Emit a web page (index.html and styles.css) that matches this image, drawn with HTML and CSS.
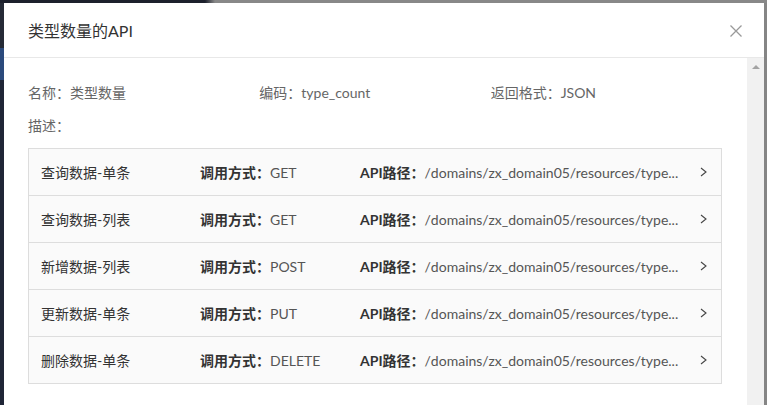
FILE: index.html
```html
<!DOCTYPE html>
<html lang="zh-CN">
<head>
<meta charset="utf-8">
<title>类型数量的API</title>
<link rel="stylesheet" href="styles.css">
</head>
<body>
<div class="page">
  <div class="top-strip"></div>
  <div class="main">
    <div class="side-left">
      <span class="sl-block sl-top"></span>
      <span class="sl-block sl-active"></span>
      <span class="sl-block sl-rest"></span>
    </div>
    <div class="modal">
      <div class="modal-header">
        <span class="title">类型数量的API</span>
        <span class="close" aria-label="关闭">
          <svg width="12" height="12" viewBox="0 0 12 12"><path d="M0.5 0.5L11.5 11.5M11.5 0.5L0.5 11.5" stroke="#999" stroke-width="1.3" fill="none"/></svg>
        </span>
      </div>
      <div class="modal-body">
        <div class="content">
          <div class="info-grid">
            <div>名称：类型数量</div>
            <div>编码：type_count</div>
            <div>返回格式：JSON</div>
            <div>描述：</div>
          </div>
          <ul class="api-list">
            <li class="api-row">
              <span class="name">查询数据-单条</span>
              <span class="method"><b>调用方式：</b>GET</span>
              <span class="path"><b>API路径：</b>/domains/zx_domain05/resources/type...</span>
              <span class="chev"><svg width="7" height="10" viewBox="0 0 7 10"><path d="M1 1L6 5L1 9" stroke="#444" stroke-width="1.1" fill="none"/></svg></span>
            </li>
            <li class="api-row">
              <span class="name">查询数据-列表</span>
              <span class="method"><b>调用方式：</b>GET</span>
              <span class="path"><b>API路径：</b>/domains/zx_domain05/resources/type...</span>
              <span class="chev"><svg width="7" height="10" viewBox="0 0 7 10"><path d="M1 1L6 5L1 9" stroke="#444" stroke-width="1.1" fill="none"/></svg></span>
            </li>
            <li class="api-row">
              <span class="name">新增数据-列表</span>
              <span class="method"><b>调用方式：</b>POST</span>
              <span class="path"><b>API路径：</b>/domains/zx_domain05/resources/type...</span>
              <span class="chev"><svg width="7" height="10" viewBox="0 0 7 10"><path d="M1 1L6 5L1 9" stroke="#444" stroke-width="1.1" fill="none"/></svg></span>
            </li>
            <li class="api-row">
              <span class="name">更新数据-单条</span>
              <span class="method"><b>调用方式：</b>PUT</span>
              <span class="path"><b>API路径：</b>/domains/zx_domain05/resources/type...</span>
              <span class="chev"><svg width="7" height="10" viewBox="0 0 7 10"><path d="M1 1L6 5L1 9" stroke="#444" stroke-width="1.1" fill="none"/></svg></span>
            </li>
            <li class="api-row">
              <span class="name">删除数据-单条</span>
              <span class="method"><b>调用方式：</b>DELETE</span>
              <span class="path"><b>API路径：</b>/domains/zx_domain05/resources/type...</span>
              <span class="chev"><svg width="7" height="10" viewBox="0 0 7 10"><path d="M1 1L6 5L1 9" stroke="#444" stroke-width="1.1" fill="none"/></svg></span>
            </li>
          </ul>
        </div>
        <div class="scrollbar"><span class="arrow-up"></span></div>
      </div>
    </div>
    <div class="side-right"></div>
  </div>
</div>
</body>
</html>
```

FILE: styles.css
```css
html, body {
  margin: 0;
  padding: 0;
  width: 767px;
  height: 405px;
  overflow: hidden;
}
body {
  font-family: "Lato", "Noto Sans CJK SC", sans-serif;
  background: #1e2333;
}
.page {
  display: grid;
  grid-template-rows: 3px 402px;
  width: 767px;
  height: 405px;
}
.top-strip {
  background: linear-gradient(to right, #1c202c 0, #1c202c 205px, #888 215px, #888 100%);
}
.main {
  display: grid;
  grid-template-columns: 4px 760px 3px;
  height: 402px;
}
.side-left {
  display: flex;
  flex-direction: column;
  background: #1e2333;
}
.sl-block { display: block; }
.sl-top { height: 45px; background: #252a36; }
.sl-active { height: 32px; background: #2b4a7c; }
.sl-rest { flex: 1; background: #1f2536; }
.side-right {
  background: #858585;
}
.modal {
  background: #fff;
  display: flex;
  flex-direction: column;
  min-height: 0;
}
.modal-header {
  height: 55px;
  box-sizing: border-box;
  border-bottom: 1px solid #e8e8e8;
  display: flex;
  align-items: center;
  justify-content: space-between;
  padding: 1px 22px 0 24px;
}
.title {
  font-size: 16px;
  line-height: 22px;
  color: #333;
}
.close {
  display: flex;
  width: 12px;
  height: 12px;
}
.modal-body {
  flex: 1;
  display: flex;
  min-height: 0;
}
.content {
  flex: 1;
  min-width: 0;
  padding: 24px 25px 0 24px;
}
.scrollbar {
  width: 17px;
  background: #f1f1f1;
  display: flex;
  justify-content: center;
  align-items: flex-start;
  padding-top: 7px;
  box-sizing: border-box;
}
.arrow-up {
  width: 0;
  height: 0;
  border-left: 4px solid transparent;
  border-right: 4px solid transparent;
  border-bottom: 4px solid #a3a3a3;
}
.info-grid {
  display: grid;
  grid-template-columns: repeat(3, 1fr);
  row-gap: 11px;
  font-size: 14px;
  line-height: 22px;
  color: #666;
}
.api-list {
  list-style: none;
  margin: 11px 0 0;
  padding: 0;
  border: 1px solid #ddd;
  background: #fafafa;
}
.api-row {
  display: flex;
  align-items: center;
  height: 46px;
  padding: 0 14px 0 12px;
  font-size: 14px;
  color: #555;
  border-top: 1px solid #ddd;
}
.api-row:first-child {
  border-top: none;
}
.api-row b {
  font-weight: bold;
  color: #333;
}
.name {
  width: 159px;
  flex: none;
  color: #333;
}
.method {
  width: 160px;
  flex: none;
}
.path {
  flex: 1;
  min-width: 0;
  white-space: nowrap;
}
.chev {
  width: 22px;
  flex: none;
  display: flex;
  justify-content: flex-end;
}
```
